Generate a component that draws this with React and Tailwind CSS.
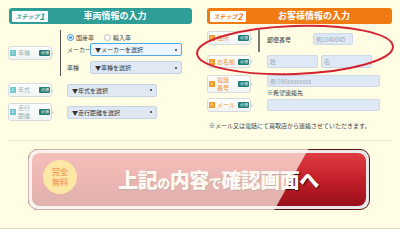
import React from "react";

const font = { fontFamily: '"Noto Sans CJK JP", "Noto Sans", sans-serif' };

const Label = ({ num, lines, tone, h = "h-[14px]" }) => {
  const orange = tone === "orange";
  return (
    <div className="flex items-center">
      <div className={`${h} w-[44px] flex items-center gap-[2px] pl-[1px] rounded-[3px] border border-[#d9dcdc] bg-gradient-to-b from-white to-[#f1f3f3] whitespace-nowrap`}>
        <span className={`w-[6px] h-[6px] shrink-0 flex items-center justify-center text-[6px] leading-none text-white ${orange ? "bg-[#f29a2e]" : "bg-[#74c6c8]"}`}>
          <span className="scale-[0.7]">{num}</span>
        </span>
        <span className={`text-[6px] leading-[8px] ${orange ? "text-[#f2902a]" : "text-[#8fb5b8]"}`}>
          {lines.map((l) => (
            <span key={l} className="block">{l}</span>
          ))}
        </span>
        <span className="ml-auto mr-[1px] shrink-0 w-[11px] h-[6px] flex items-center justify-center rounded-[1px] bg-[#237e76] text-white text-[6px] leading-none overflow-hidden">
          <span className="scale-[0.65]">必須</span>
        </span>
      </div>
      <span className="w-[3px] h-[3px] border-t border-r border-[#cfd4d4] rotate-45 -ml-[2px]" />
    </div>
  );
};

const Select = ({ text, w, focus }) => (
  <div className={`${w} h-[13px] flex items-center px-[4px] rounded-[2px] border text-[6px] text-[#333] whitespace-nowrap ${focus ? "border-[#4ea7e6] bg-[#eef6fd]" : "border-[#c6d3e2] bg-[#dfe8f3]"}`}>
    <span>{text}</span>
    <span className="ml-auto w-[2px] h-[2px] rounded-full bg-[#333]" />
  </div>
);

const Input = ({ ph, w, h = "h-[12px]" }) => (
  <div className={`${w} ${h} flex items-center px-[2px] rounded-[2px] border border-[#cdd9e8] bg-[#dfe9f6] text-[6px] text-[#9aa8b4] whitespace-nowrap`}>
    {ph}
  </div>
);

const Header = ({ step, title, color, stepColor }) => (
  <div className={`h-[16px] flex items-center rounded-[3px] ${color} pl-[3px]`}>
    <div className="h-[11px] w-[36px] flex items-center justify-center bg-white rounded-[1px] whitespace-nowrap">
      <span className={`italic font-bold text-[6px] ${stepColor}`}>ステップ</span>
      <span className={`italic font-bold text-[9px] leading-none ${stepColor}`}>{step}</span>
    </div>
    <div className="flex-1 text-center text-white font-bold text-[9px] pr-[10px] whitespace-nowrap">{title}</div>
  </div>
);

const Radio = ({ checked, label }) => (
  <div className="flex items-center gap-[2px] whitespace-nowrap">
    <span className={`w-[7px] h-[7px] rounded-full border flex items-center justify-center bg-white ${checked ? "border-[#3d9ae0]" : "border-[#bbb]"}`}>
      {checked && <span className="w-[3px] h-[3px] rounded-full bg-[#3d9ae0]" />}
    </span>
    <span className="text-[6px] text-[#444]">{label}</span>
  </div>
);

export default function App() {
  return (
    <div style={font} className="relative w-[400px] h-[229px] overflow-hidden bg-[#fffde4] border-b border-[#dcd9c2]">
      <div className="flex pt-[8px] pl-[8px] gap-[15px] h-[140px]">
        {/* left */}
        <div className="w-[184px]">
          <div className="ml-[1px]">
            <Header step="1" title="車両情報の入力" color="bg-[#2e9e97]" stepColor="text-[#2e9e97]" />
          </div>
          <div className="flex mt-[6px] h-[46px]">
            <div className="w-[52px] flex items-center">
              <Label num="1" lines={["車種"]} />
            </div>
            <div className="border-l border-[#555] pl-[6px] flex flex-col">
              <div className="h-[12px] flex items-center gap-[10px] pt-[2px]">
                <Radio checked label="国産車" />
                <Radio label="輸入車" />
              </div>
              <div className="flex items-center mt-[1px]">
                <span className="w-[23px] text-[6px] text-[#444] whitespace-nowrap">メーカー</span>
                <Select text="▼メーカーを選択" w="w-[92px]" focus />
              </div>
              <div className="flex items-center mt-[5px]">
                <span className="w-[23px] text-[6px] text-[#444] whitespace-nowrap">車種</span>
                <Select text="▼車種を選択" w="w-[92px]" />
              </div>
            </div>
          </div>
          <div className="flex items-center mt-[7px]">
            <div className="w-[59px]">
              <Label num="2" lines={["年式"]} />
            </div>
            <Select text="▼年式を選択" w="w-[90px]" />
          </div>
          <div className="flex items-center mt-[6px]">
            <div className="w-[59px]">
              <Label num="3" lines={["走行", "距離"]} h="h-[18px]" />
            </div>
            <Select text="▼走行距離を選択" w="w-[90px]" />
          </div>
        </div>

        {/* right */}
        <div className="w-[185px]">
          <Header step="2" title="お客様情報の入力" color="bg-[#f07b12]" stepColor="text-[#f07b12]" />
          <div className="flex mt-[6px]">
            <div className="w-[51px] pt-[1px]">
              <Label num="1" lines={["住所"]} tone="orange" />
            </div>
            <div className="border-l-2 border-[#777] h-[22px] pl-[7px] flex items-start pt-[3px]">
              <span className="w-[46px] text-[6px] text-[#333] pt-[2px] whitespace-nowrap">郵便番号</span>
              <Input ph="例1040045" w="w-[40px]" />
            </div>
          </div>
          <div className="flex items-center mt-[3px]">
            <div className="w-[60px]">
              <Label num="2" lines={["お名前"]} tone="orange" h="h-[13px]" />
            </div>
            <Input ph="姓" w="w-[51px]" h="h-[13px]" />
            <div className="w-[3px]" />
            <Input ph="名" w="w-[51px]" h="h-[13px]" />
          </div>
          <div className="flex mt-[7px]">
            <div className="w-[60px]">
              <Label num="3" lines={["電話", "番号"]} tone="orange" h="h-[18px]" />
            </div>
            <div>
              <Input ph="例 090xxxxxxxx" w="w-[113px]" />
              <div className="text-[6px] leading-[7px] text-[#444] mt-[2px] whitespace-nowrap">※希望連絡先</div>
            </div>
          </div>
          <div className="flex items-center mt-[2px]">
            <div className="w-[60px]">
              <Label num="4" lines={["メール"]} tone="orange" />
            </div>
            <Input ph="" w="w-[113px]" />
          </div>
          <div className="mt-[9px] pl-[2px] text-[6px] text-[#444] whitespace-nowrap">※メール又は電話にて買取店から連絡させていただきます。</div>
        </div>
      </div>

      <div className="mx-[8px] h-px bg-[#ebe7cc]" />

      <div className="relative ml-[28px] mt-[8px] w-[342px] h-[61px] rounded-[10px] border border-[#5a1414] bg-[#e9e9e9] p-[3px]">
        <div className="relative h-full rounded-[8px] bg-gradient-to-b from-[#de3b42] via-[#c41f2a] to-[#98101a] flex items-center overflow-hidden">
          <div className="ml-[11px] w-[34px] h-[34px] shrink-0" />
          <div className="flex-1 text-center text-white font-black text-[20px] tracking-[-0.5px] pr-[6px] whitespace-nowrap [text-shadow:1px_1px_1px_#3a0508]">
            上記<span className="text-[13px]">の</span>内容<span className="text-[13px]">で</span>確認画面へ
          </div>
        </div>
        <div className="absolute inset-[-1px] rounded-[10px] bg-[#fdf6ec]/70 [clip-path:polygon(0_0,82%_0,72%_100%,0_100%)]" />
        <div className="absolute left-[14px] top-[10px] w-[34px] h-[34px] rounded-full bg-[#fde7a4] flex flex-col items-center justify-center text-[#f3a468] font-bold text-[8px] leading-[10px]">
          <div>完全</div>
          <div>無料</div>
        </div>
      </div>

      <svg className="absolute left-0 top-0 pointer-events-none" width="400" height="229">
        <ellipse cx="295" cy="50" rx="98" ry="24" fill="none" stroke="#d42230" strokeWidth="2" transform="rotate(-2 295 50)" />
      </svg>
    </div>
  );
}
